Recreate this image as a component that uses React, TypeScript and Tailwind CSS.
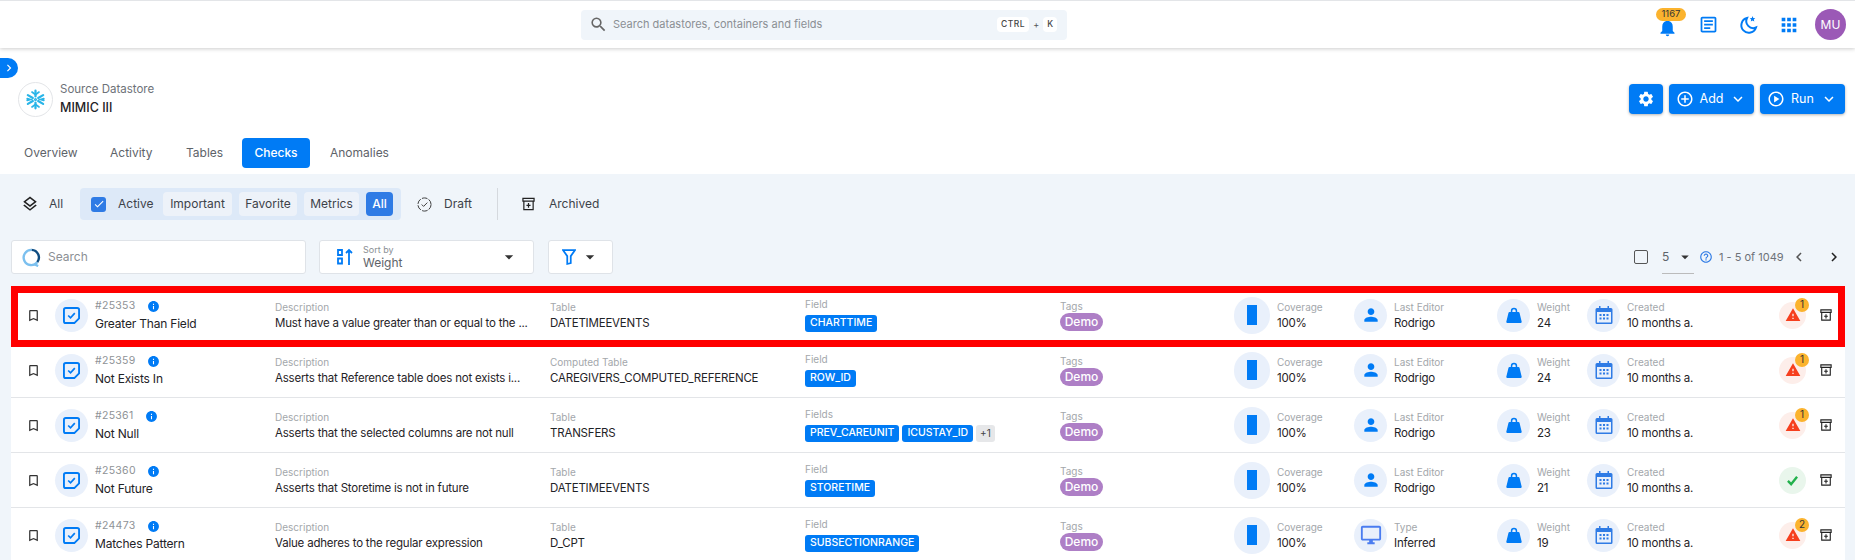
import React from "react";
import {
  MdBookmarkBorder,
  MdInfo,
  MdPerson,
  MdWarning,
  MdCheck,
  MdOutlineDesktopWindows,
  MdSettings,
  MdNotifications,
  MdOutlineArticle,
  MdApps,
  MdKeyboardArrowDown,
  MdArrowDropDown,
  MdAddCircleOutline,
  MdOutlinePlayCircle,
  MdChevronLeft,
  MdChevronRight,
  MdSearch,
  MdOutlineLayers,
  MdOutlineHelpOutline,
} from "react-icons/md";

const rows = [
  { id: "#25353", name: "Greater Than Field", desc: "Must have a value greater than or equal to the ...", tableLabel: "Table", table: "DATETIMEEVENTS", fieldLabel: "Field", fields: ["CHARTTIME"], more: "", editorLabel: "Last Editor", editor: "Rodrigo", weight: "24", alerts: "1" },
  { id: "#25359", name: "Not Exists In", desc: "Asserts that Reference table does not exists i...", tableLabel: "Computed Table", table: "CAREGIVERS_COMPUTED_REFERENCE", fieldLabel: "Field", fields: ["ROW_ID"], more: "", editorLabel: "Last Editor", editor: "Rodrigo", weight: "24", alerts: "1" },
  { id: "#25361", name: "Not Null", desc: "Asserts that the selected columns are not null", tableLabel: "Table", table: "TRANSFERS", fieldLabel: "Fields", fields: ["PREV_CAREUNIT", "ICUSTAY_ID"], more: "+1", editorLabel: "Last Editor", editor: "Rodrigo", weight: "23", alerts: "1" },
  { id: "#25360", name: "Not Future", desc: "Asserts that Storetime is not in future", tableLabel: "Table", table: "DATETIMEEVENTS", fieldLabel: "Field", fields: ["STORETIME"], more: "", editorLabel: "Last Editor", editor: "Rodrigo", weight: "21", alerts: "" },
  { id: "#24473", name: "Matches Pattern", desc: "Value adheres to the regular expression", tableLabel: "Table", table: "D_CPT", fieldLabel: "Field", fields: ["SUBSECTIONRANGE"], more: "", editorLabel: "Type", editor: "Inferred", weight: "19", alerts: "2" },
];

const CheckDoc = () => (
  <svg viewBox="0 0 18 18" className="w-[17px] h-[17px]" fill="none">
    <path d="M3 1h12a2 2 0 0 1 2 2v9l-5 5H3a2 2 0 0 1-2-2V3a2 2 0 0 1 2-2z" stroke="#007bf5" strokeWidth="2" />
    <path d="M5.500 9l2.500 2.500L12.500 6.500" stroke="#007bf5" strokeWidth="1.800" />
  </svg>
);

const Kettle = () => (
  <svg viewBox="0 0 18 18" className="w-[18px] h-[18px]" fill="#007bf5">
    <path d="M5.800 7V5a3.200 3.200 0 0 1 6.400 0v2h-1.500V5a1.700 1.700 0 0 0-3.400 0v2z" />
    <path d="M4.500 6h9c.5 0 .8.300 1 .8l2.200 9c.1.600-.3 1.100-.9 1.100H2.200c-.6 0-1-.5-.9-1.100l2.200-9c.2-.5.5-.8 1-.8z" />
  </svg>
);

const Calendar = () => (
  <svg viewBox="0 0 18 18" className="w-[18px] h-[18px]" fill="#2f7be5">
    <path d="M4 0h1.500v2h7V0H14v2h2a1.500 1.500 0 0 1 1.500 1.500v13A1.500 1.500 0 0 1 16 18H2a1.500 1.500 0 0 1-1.500-1.500v-13A1.500 1.500 0 0 1 2 2h2zM2 6v10.500h14V6z" />
    <path d="M4.500 8h2v2h-2zM8 8h2v2H8zM11.500 8h2v2h-2zM4.500 11.500h2v2h-2zM8 11.500h2v2H8zM11.500 11.500h2v2h-2z" />
  </svg>
);

const ArchiveIn = ({ className }: { className: string }) => (
  <svg viewBox="0 0 14 14" className={className} fill="none" stroke="#222" strokeWidth="1.300">
    <path d="M1 1h12v3H1zM2 4v9h10V4" />
    <path d="M7 6v5M4.800 8.500h4.400" />
  </svg>
);

const SnowFlake = () => (
  <svg viewBox="0 0 24 24" className="w-[21px] h-[21px]" fill="none" stroke="#29b5e8" strokeWidth="2.600" strokeLinecap="round">
    <path d="M12 2v6.500M12 15.500V22M3.300 7l5.600 3.300M15.100 13.700l5.600 3.300M3.300 17l5.600-3.300M15.100 10.300l5.600-3.300" />
    <path d="M8 3.500l4 3 4-3M8 20.500l4-3 4 3M2.500 11l3.500 1-3.500 1M21.500 11l-3.500 1 3.500 1" strokeWidth="2" />
    <circle cx="12" cy="12" r="1" strokeWidth="1.500" />
  </svg>
);

const Moon = () => (
  <svg viewBox="0 0 20 20" className="w-[20px] h-[20px]" fill="none" stroke="#007bf5" strokeWidth="2">
    <path d="M8 3a7.500 7.500 0 1 0 9 9.500A7 7 0 0 1 8 3z" />
    <path d="M13.500 1l.8 2 2 .3-1.500 1.300.5 2-1.800-1.100-1.700 1.100.4-2L10.800 3.300l2-.3z" fill="#007bf5" stroke="none" />
  </svg>
);

const Pill = ({ label, width, active }: { label: string; width: string; active?: boolean }) => (
  <span className={`h-6 flex items-center justify-center rounded shrink-0 ${width} ${active ? "bg-[#2f7be5] text-white font-medium" : "bg-[#edf2f9] text-[#3d4249]"}`}>
    {label}
  </span>
);

const Stat = ({ width, label, value, icon, big }: { width: string; label: string; value: string; icon: React.ReactNode; big?: boolean }) => (
  <div className={`flex items-center gap-[7px] shrink-0 ${width}`}>
    <div className={`rounded-full bg-[#e9f0fb] flex items-center justify-center shrink-0 ${big ? "w-9 h-[37px]" : "w-[33px] h-[33px]"}`}>{icon}</div>
    <div>
      <div className="text-[10px] text-[#a3a7ab] leading-[16px]">{label}</div>
      <div className="text-[11.5px] text-[#1f2327] leading-[16px] tracking-[-0.2px] whitespace-nowrap">{value}</div>
    </div>
  </div>
);

const Row = ({ row }: { row: (typeof rows)[number] }) => (
  <div className="h-[55px] flex items-center bg-white border-b border-[#e3e5e8] shrink-0">
    <div className="w-11 flex justify-center shrink-0">
      <MdBookmarkBorder className="w-[15px] h-[15px] text-[#333]" />
    </div>
    <div className="w-[33px] h-[33px] rounded-full bg-[#e9f0fb] flex items-center justify-center shrink-0">
      <CheckDoc />
    </div>
    <div className="w-[187px] pl-[7px] shrink-0">
      <div className="flex items-center gap-[11px] text-[10.5px] text-[#8e9296] leading-[18px] tracking-[0.3px]">
        {row.id}
        <MdInfo className="w-[13px] h-[13px] text-[#007bf5]" />
      </div>
      <div className="text-[12px] text-[#1f2327] leading-[18px] tracking-[-0.2px]">{row.name}</div>
    </div>
    <div className="w-[275px] shrink-0">
      <div className="text-[10px] text-[#a3a7ab] leading-[16px]">Description</div>
      <div className="text-[11.5px] text-[#1f2327] leading-[16px] tracking-[-0.2px] whitespace-nowrap">{row.desc}</div>
    </div>
    <div className="w-[255px] shrink-0">
      <div className="text-[10px] text-[#a3a7ab] leading-[16px]">{row.tableLabel}</div>
      <div className="text-[11.5px] text-[#1f2327] leading-[16px] tracking-[-0.2px] whitespace-nowrap">{row.table}</div>
    </div>
    <div className="w-[255px] shrink-0 mb-[2px]">
      <div className="text-[10px] text-[#a3a7ab] leading-[14px]">{row.fieldLabel}</div>
      <div className="flex gap-[3px] mt-[4px]">
        {row.fields.map((f) => (
          <span key={f} className="h-[17px] flex items-center rounded-[3px] bg-[#007bf5] text-white text-[10.5px] font-medium px-[5px]">{f}</span>
        ))}
        {row.more && <span className="h-[17px] flex items-center rounded-[3px] bg-[#e6e7e9] text-[#444] text-[10px] px-[4px]">{row.more}</span>}
      </div>
    </div>
    <div className="w-[174px] shrink-0">
      <div className="text-[10px] text-[#a3a7ab] leading-[14px]">Tags</div>
      <span className="flex items-center justify-center w-[43px] h-[18px] rounded-full bg-[#ae7fc6] text-white text-[12px] font-medium">Demo</span>
    </div>
    <Stat width="w-[120px]" big label="Coverage" value="100%" icon={<div className="w-2.5 h-5 bg-[#007bf5]" />} />
    <Stat
      width="w-[143px]"
      label={row.editorLabel}
      value={row.editor}
      icon={row.editor === "Inferred" ? <MdOutlineDesktopWindows className="w-[22px] h-[22px] text-[#4a7cf0]" /> : <MdPerson className="w-[20px] h-[20px] text-[#007bf5]" />}
    />
    <Stat width="w-[90px]" label="Weight" value={row.weight} icon={<Kettle />} />
    <Stat width="w-[192px]" label="Created" value="10 months a." icon={<Calendar />} />
    <div className="relative w-[27px] h-[27px] shrink-0">
      <div className={`w-full h-full rounded-full flex items-center justify-center ${row.alerts ? "bg-[#fdeeea]" : "bg-[#e9f6ec]"}`}>
        {row.alerts ? (
          <MdWarning className="w-[16px] h-[16px] text-[#f63f1e]" />
        ) : (
          <svg viewBox="0 0 12 12" className="w-[11px] h-[11px]" fill="none" stroke="#22b14c" strokeWidth="2.600"><path d="M1 6.500l3.500 3.500L11 2" /></svg>
        )}
      </div>
      {row.alerts && (
        <span className="absolute -top-[4px] left-[16px] w-[14px] h-[14px] rounded-full bg-[#fbb32e] text-[#333] text-[10px] flex items-center justify-center">{row.alerts}</span>
      )}
    </div>
    <div className="w-[39px] flex justify-center shrink-0">
      <ArchiveIn className="w-[12px] h-[12px]" />
    </div>
  </div>
);

export default function App() {
  return (
    <div className="relative h-[560px] overflow-hidden bg-white font-['Inter',sans-serif] text-[#2b2f33]">
      <header className="relative z-10 h-[48px] border-t border-[#e3e5e8] bg-white shadow-[0_1px_4px_rgba(0,0,0,0.2)] flex items-center">
        <div className="ml-[581px] w-[486px] h-[30px] rounded bg-[#f0f5fa] flex items-center pl-2 pr-[10px]">
          <MdSearch className="w-[19px] h-[19px] text-[#666]" />
          <span className="ml-[5px] text-[11px] text-[#8b8f94] flex-1">Search datastores, containers and fields</span>
          <span className="text-[8.5px] font-medium bg-white rounded px-1 py-[1px] text-[#444] tracking-[0.5px]">CTRL</span>
          <span className="mx-1 text-[9px] text-[#555]">+</span>
          <span className="text-[8.5px] font-medium bg-white rounded px-1 py-[1px] text-[#444]">K</span>
        </div>
        <div className="flex-1" />
        <div className="relative w-[40px] h-[24px] flex justify-center">
          <MdNotifications className="w-[21px] h-[21px] text-[#007bf5] mt-[4px]" />
          <span className="absolute -top-[5px] left-[9px] w-[30px] h-[13px] rounded-full bg-[#fbb32e] text-[9.5px] text-[#333] flex items-center justify-center">1167</span>
        </div>
        <div className="w-[42px] flex justify-center"><MdOutlineArticle className="w-[21px] h-[21px] text-[#007bf5]" /></div>
        <div className="w-[40px] flex justify-center"><Moon /></div>
        <div className="w-[40px] flex justify-center"><MdApps className="w-[22px] h-[22px] text-[#007bf5]" /></div>
        <div className="ml-[6px] mr-[9px] w-[31px] h-[31px] rounded-full bg-[#9b59b6] text-white text-[12px] flex items-center justify-center">MU</div>
      </header>

      <div className="relative h-[126px]">
        <span className="absolute left-0 top-[10px] w-[18px] h-[20px] rounded-r-full bg-[#007bf5] flex items-center justify-center">
          <MdChevronRight className="w-[14px] h-[14px] text-white" />
        </span>
        <div className="flex justify-between pt-[34px] pl-[18px] pr-[10px] h-[69px]">
          <div className="flex items-start gap-[7px]">
            <div className="w-[35px] h-[35px] rounded-full border border-[#e3e5e8] flex items-center justify-center">
              <SnowFlake />
            </div>
            <div className="-mt-[2px]">
              <div className="text-[11.5px] text-[#6d7278] leading-[18px]">Source Datastore</div>
              <div className="text-[12.5px] font-medium text-[#1f2327] leading-[20px]">MIMIC III</div>
            </div>
          </div>
          <div className="flex gap-[6px] pt-[2px]">
            <button className="w-[34px] h-[30px] rounded bg-[#007bf5] shadow-[0_1px_3px_rgba(0,0,0,0.3)] flex items-center justify-center">
              <MdSettings className="w-[18px] h-[18px] text-white" />
            </button>
            <button className="w-[85px] h-[30px] rounded bg-[#007bf5] shadow-[0_1px_3px_rgba(0,0,0,0.3)] text-white text-[12.5px] flex items-center justify-center gap-[6px]">
              <MdAddCircleOutline className="w-[18px] h-[18px]" /> Add <MdKeyboardArrowDown className="w-[18px] h-[18px]" />
            </button>
            <button className="w-[85px] h-[30px] rounded bg-[#007bf5] shadow-[0_1px_3px_rgba(0,0,0,0.3)] text-white text-[12.5px] flex items-center justify-center gap-[6px]">
              <MdOutlinePlayCircle className="w-[18px] h-[18px]" /> Run <MdKeyboardArrowDown className="w-[18px] h-[18px]" />
            </button>
          </div>
        </div>
        <div className="flex items-center h-[30px] mt-[21px] pl-[11px] text-[12px] text-[#5e6369]">
          <span className="w-[99px] pl-[13px]">Overview</span>
          <span className="w-[76px]">Activity</span>
          <span className="w-[56px]">Tables</span>
          <span className="w-[68px] h-[30px] rounded bg-[#007bf5] text-white font-medium flex items-center justify-center">Checks</span>
          <span className="ml-[20px]">Anomalies</span>
        </div>
      </div>

      <main className="h-[386px] bg-[#f0f5fa] px-[10px] pt-[14px]">
        <div className="flex items-center h-[32px] text-[12px] text-[#3d4249]">
          <MdOutlineLayers className="ml-[11px] w-[18px] h-[18px] text-[#222]" />
          <span className="ml-[10px] w-[22px]">All</span>
          <div className="ml-[9px] w-[321px] h-[32px] rounded bg-[#dde9f8] flex items-center gap-[7px] pl-[11px]">
            <span className="w-[15px] h-[15px] rounded-[3px] bg-[#2f7be5] flex items-center justify-center shrink-0"><MdCheck className="w-3 h-3 text-white" /></span>
            <span className="ml-[5px] w-[38px]">Active</span>
            <Pill label="Important" width="w-[69px]" />
            <Pill label="Favorite" width="w-[58px]" />
            <Pill label="Metrics" width="w-[55px]" />
            <Pill label="All" width="w-[27px]" active />
          </div>
          <svg viewBox="0 0 16 16" className="ml-[16px] w-[15px] h-[15px]" fill="none" stroke="#333" strokeWidth="1"><circle cx="8" cy="8" r="7" strokeDasharray="6 1.500" /><path d="M5 8l2 2 4-4" /></svg>
          <span className="ml-[12px] w-[38px]">Draft</span>
          <div className="ml-[15px] w-px h-[32px] bg-[#d5d9de]" />
          <ArchiveIn className="ml-[24px] w-[13px] h-[14px]" />
          <span className="ml-[14px]">Archived</span>
        </div>

        <div className="flex items-center mt-[20px] h-[34px]">
          <div className="ml-px w-[295px] h-[34px] rounded-[3px] border border-[#dfe3e8] bg-white flex items-center pl-[10px] gap-[7px]">
            <svg viewBox="0 0 20 20" className="w-[19px] h-[19px]" fill="none" strokeWidth="2.500"><path d="M10 2a8 8 0 0 1 6 13" stroke="#0f4c81" /><path d="M16 15a8 8 0 1 1-6-13" stroke="#7cc0ef" /><path d="M13 17l4 2" stroke="#7cc0ef" /></svg>
            <span className="text-[12px] text-[#8b8f94]">Search</span>
          </div>
          <div className="ml-[13px] w-[215px] h-[34px] rounded-[3px] border border-[#dfe3e8] bg-white flex items-center pl-[16px] pr-[14px]">
            <svg viewBox="0 0 18 18" className="w-[18px] h-[18px]" fill="none" stroke="#007bf5" strokeWidth="1.800"><path d="M2 2h4v5H2zM2 10.500h4v5H2zM13 17V2M10 5l3-3 3 3" /></svg>
            <div className="ml-[9px] flex-1">
              <div className="text-[9px] text-[#8b8f94] leading-[11px]">Sort by</div>
              <div className="text-[12px] text-[#5e6369] leading-[15px]">Weight</div>
            </div>
            <MdArrowDropDown className="w-[20px] h-[20px] text-[#333]" />
          </div>
          <div className="ml-[14px] w-[65px] h-[34px] rounded-[3px] border border-[#dfe3e8] bg-white flex items-center justify-center gap-[4px]">
            <svg viewBox="0 0 16 18" className="w-[14px] h-[18px]" fill="none" stroke="#007bf5" strokeWidth="2"><path d="M1 1h14L10 8v8l-4 1V8z" /></svg>
            <MdArrowDropDown className="w-[20px] h-[20px] text-[#333]" />
          </div>
          <div className="flex-1" />
          <span className="w-[14px] h-[14px] rounded-[2px] border border-[#555]" />
          <div className="ml-[14px] w-[32px] h-[34px] border-b border-[#bbb] flex items-center justify-between text-[12px] text-[#5e6369]">
            5
            <MdArrowDropDown className="w-[18px] h-[18px] text-[#333]" />
          </div>
          <MdOutlineHelpOutline className="ml-[5px] w-[14px] h-[14px] text-[#2f7be5]" />
          <span className="ml-[6px] w-[61px] text-[11px] text-[#6d7278] whitespace-nowrap">1 - 5 of 1049</span>
          <MdChevronLeft className="ml-[10px] w-[18px] h-[18px] text-[#555]" />
          <MdChevronRight className="ml-[17px] mr-[2px] w-[18px] h-[18px] text-[#222]" />
        </div>

        <div className="mt-[14px] ml-px flex flex-col">
          {rows.map((row) => (
            <Row key={row.id} row={row} />
          ))}
        </div>
      </main>

      <div className="absolute left-[11px] top-[286px] w-[1834px] h-[61px] border-[7px] border-[#ff0000]" />
    </div>
  );
}
